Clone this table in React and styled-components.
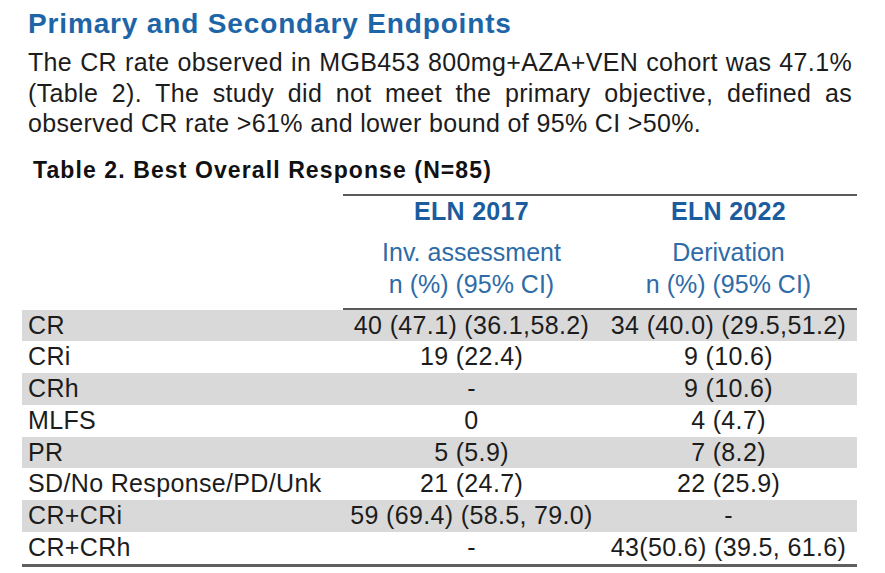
import React from "react";
import styled, { createGlobalStyle } from "styled-components";

const Global = createGlobalStyle`
  html, body { margin: 0; padding: 0; background: #ffffff; }
  body { font-family: "Liberation Sans", Arial, Helvetica, sans-serif; color: #1c1c1c; }
  * { box-sizing: border-box; }
`;

const Page = styled.div`
  width: 885px;
  height: 573px;
  padding: 9px 0 0 22px;
  overflow: hidden;
`;

const Title = styled.h1`
  margin: 0 0 0 6px;
  font-size: 28px;
  line-height: 30px;
  font-weight: 700;
  letter-spacing: 0.85px;
  color: #1d65a7;
  white-space: nowrap;
`;

const Paragraph = styled.p`
  margin: 8px 0 0 6px;
  width: 824px;
  font-size: 25px;
  line-height: 30.5px;
  letter-spacing: 0.35px;
  color: #1c1c1c;
`;

const Line = styled.span`
  display: block;
  white-space: nowrap;
  text-align: ${(p) => (p.$justify ? "justify" : "left")};
  text-align-last: ${(p) => (p.$justify ? "justify" : "left")};
`;

const Caption = styled.div`
  margin: 18px 0 0 11px;
  font-size: 23px;
  line-height: 26px;
  font-weight: 700;
  letter-spacing: 1.1px;
  color: #111;
  white-space: nowrap;
`;

const Table = styled.div`
  margin-top: 11px;
  width: 835px;
`;

const HeadRow = styled.div`
  display: grid;
  grid-template-columns: 321px 1fr;
`;

const HeadBlock = styled.div`
  display: grid;
  grid-template-columns: 257px 257px;
  border-top: 2px solid #5b5b5b;
  border-bottom: 2px solid #5b5b5b;
`;

const HeadColumn = styled.div`
  display: flex;
  flex-direction: column;
  align-items: center;
  padding-bottom: 8px;
`;

const HeadTitle = styled.div`
  font-size: 25px;
  line-height: 30px;
  font-weight: 700;
  letter-spacing: 0.3px;
  color: #1b5c9e;
  margin-bottom: 10px;
  white-space: nowrap;
`;

const HeadSub = styled.div`
  font-size: 25px;
  line-height: 32px;
  color: #2e6ba7;
  white-space: nowrap;
`;

const Body = styled.div`
  border-bottom: 3px solid #5f5f5f;
`;

const Row = styled.div`
  display: grid;
  grid-template-columns: 321px 257px 257px;
  height: 31.75px;
  background: ${(p) => (p.$shaded ? "#d9d9d9" : "transparent")};
  font-size: 25px;
  line-height: 31.75px;
  letter-spacing: 0.35px;
  color: #1c1c1c;
`;

const Label = styled.div`
  padding-left: 6px;
  white-space: nowrap;
`;

const Value = styled.div`
  text-align: center;
  white-space: nowrap;
`;

const rows = [
  ["CR", "40 (47.1) (36.1,58.2)", "34 (40.0) (29.5,51.2)"],
  ["CRi", "19 (22.4)", "9 (10.6)"],
  ["CRh", "-", "9 (10.6)"],
  ["MLFS", "0", "4 (4.7)"],
  ["PR", "5 (5.9)", "7 (8.2)"],
  ["SD/No Response/PD/Unk", "21 (24.7)", "22 (25.9)"],
  ["CR+CRi", "59 (69.4) (58.5, 79.0)", "-"],
  ["CR+CRh", "-", "43(50.6) (39.5, 61.6)"],
];

export default function App() {
  return (
    <>
      <Global />
      <Page>
        <Title>Primary and Secondary Endpoints</Title>
        <Paragraph>
          <Line $justify>The CR rate observed in MGB453 800mg+AZA+VEN cohort was 47.1%</Line>
          <Line $justify>(Table 2). The study did not meet the primary objective, defined as</Line>
          <Line>observed CR rate &gt;61% and lower bound of 95% CI &gt;50%.</Line>
        </Paragraph>
        <Caption>Table 2. Best Overall Response (N=85)</Caption>
        <Table>
          <HeadRow>
            <div />
            <HeadBlock>
              <HeadColumn>
                <HeadTitle>ELN 2017</HeadTitle>
                <HeadSub>Inv. assessment</HeadSub>
                <HeadSub>n (%) (95% CI)</HeadSub>
              </HeadColumn>
              <HeadColumn>
                <HeadTitle>ELN 2022</HeadTitle>
                <HeadSub>Derivation</HeadSub>
                <HeadSub>n (%) (95% CI)</HeadSub>
              </HeadColumn>
            </HeadBlock>
          </HeadRow>
          <Body>
            {rows.map((r, i) => (
              <Row key={r[0]} $shaded={i % 2 === 0}>
                <Label>{r[0]}</Label>
                <Value>{r[1]}</Value>
                <Value>{r[2]}</Value>
              </Row>
            ))}
          </Body>
        </Table>
      </Page>
    </>
  );
}
